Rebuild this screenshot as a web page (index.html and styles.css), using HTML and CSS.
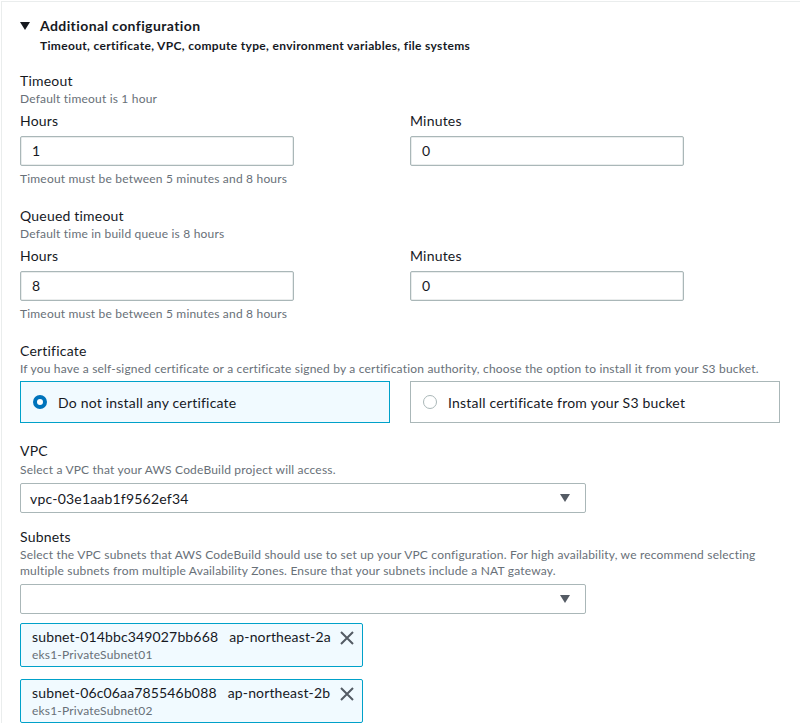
FILE: index.html
```html
<!DOCTYPE html>
<html>
<head>
<meta charset="utf-8">
<link rel="stylesheet" href="styles.css">
</head>
<body>
<div class="panel">
  <div class="header">
    <div class="header-title">
      <svg class="caret" width="10" height="8" viewBox="0 0 10 8"><path d="M0 0 H10 L5 8 Z" fill="#16191f"/></svg>
      <span>Additional configuration</span>
    </div>
    <div class="header-sub">Timeout, certificate, VPC, compute type, environment variables, file systems</div>
  </div>

  <div class="section">
    <div class="label">Timeout</div>
    <div class="desc">Default timeout is 1 hour</div>
    <div class="cols">
      <div class="col">
        <div class="sublabel">Hours</div>
        <div class="input">1</div>
        <div class="hint">Timeout must be between 5 minutes and 8 hours</div>
      </div>
      <div class="col">
        <div class="sublabel">Minutes</div>
        <div class="input">0</div>
      </div>
    </div>
  </div>

  <div class="section">
    <div class="label">Queued timeout</div>
    <div class="desc">Default time in build queue is 8 hours</div>
    <div class="cols">
      <div class="col">
        <div class="sublabel">Hours</div>
        <div class="input">8</div>
        <div class="hint">Timeout must be between 5 minutes and 8 hours</div>
      </div>
      <div class="col">
        <div class="sublabel">Minutes</div>
        <div class="input">0</div>
      </div>
    </div>
  </div>

  <div class="section">
    <div class="label">Certificate</div>
    <div class="desc">If you have a self-signed certificate or a certificate signed by a certification authority, choose the option to install it from your S3 bucket.</div>
    <div class="tiles">
      <div class="tile selected">
        <span class="radio on"></span>
        <span>Do not install any certificate</span>
      </div>
      <div class="tile">
        <span class="radio"></span>
        <span>Install certificate from your S3 bucket</span>
      </div>
    </div>
  </div>

  <div class="section vpc">
    <div class="label">VPC</div>
    <div class="desc">Select a VPC that your AWS CodeBuild project will access.</div>
    <div class="select">
      <span>vpc-03e1aab1f9562ef34</span>
      <svg class="arrow" width="10" height="8" viewBox="0 0 10 8"><path d="M0 0 H10 L5 8 Z" fill="#545b64"/></svg>
    </div>
  </div>

  <div class="section subnets">
    <div class="label">Subnets</div>
    <div class="desc">Select the VPC subnets that AWS CodeBuild should use to set up your VPC configuration. For high availability, we recommend selecting multiple subnets from multiple Availability Zones. Ensure that your subnets include a NAT gateway.</div>
    <div class="select">
      <span></span>
      <svg class="arrow" width="10" height="8" viewBox="0 0 10 8"><path d="M0 0 H10 L5 8 Z" fill="#545b64"/></svg>
    </div>
    <div class="tokens">
      <div class="token">
        <div class="token-text">
          <div class="token-main"><span>subnet-014bbc349027bb668</span><span>ap-northeast-2a</span></div>
          <div class="token-sub">eks1-PrivateSubnet01</div>
        </div>
        <svg class="x" width="14" height="14" viewBox="0 0 14 14"><path d="M1 1 L13 13 M13 1 L1 13" stroke="#545b64" stroke-width="2" fill="none"/></svg>
      </div>
      <div class="token">
        <div class="token-text">
          <div class="token-main"><span>subnet-06c06aa785546b088</span><span>ap-northeast-2b</span></div>
          <div class="token-sub">eks1-PrivateSubnet02</div>
        </div>
        <svg class="x" width="14" height="14" viewBox="0 0 14 14"><path d="M1 1 L13 13 M13 1 L1 13" stroke="#545b64" stroke-width="2" fill="none"/></svg>
      </div>
    </div>
  </div>
</div>
</body>
</html>
```

FILE: styles.css
```css
html, body {
  margin: 0;
  padding: 0;
  background: #ffffff;
}
body {
  font-family: Lato, "Liberation Sans", sans-serif;
  color: #16191f;
  font-size: 14px;
  letter-spacing: 0.2px;
}
.panel {
  margin: 1px 0 0 1px;
  border-top: 1px solid #eaeded;
  border-left: 1px solid #eaeded;
  padding: 13px 20px 0 18px;
}
.header-title {
  display: flex;
  align-items: center;
  gap: 10px;
  font-weight: 700;
  font-size: 14px;
  line-height: 22px;
  color: #16191f;
  letter-spacing: 0.4px;
}
.caret {
  display: block;
}
.header-sub {
  margin-left: 20px;
  font-weight: 700;
  font-size: 12px;
  line-height: 16px;
  margin-top: 1px;
  letter-spacing: 0.33px;
}
.section {
  margin-top: 17px;
}
.section + .section {
  margin-top: 19px;
}
.label {
  font-size: 14px;
  line-height: 20px;
}
.desc {
  font-size: 12px;
  line-height: 16px;
  color: #687078;
  letter-spacing: 0.19px;
}
.cols {
  display: grid;
  grid-template-columns: 370px 370px;
  column-gap: 20px;
  margin-top: 4px;
}
.sublabel {
  font-size: 14px;
  line-height: 20px;
}
.input {
  box-sizing: border-box;
  width: 274px;
  height: 30px;
  margin-top: 5px;
  border: 1px solid #aab7b8;
  border-radius: 2px;
  box-shadow: inset 0 0 0 0.5px #d5dbdb;
  padding: 0 11px;
  line-height: 28px;
  font-size: 14px;
}
.hint {
  margin-top: 5px;
  font-size: 12px;
  line-height: 16px;
  color: #687078;
  letter-spacing: 0.19px;
}
.tiles {
  display: grid;
  grid-template-columns: 370px 370px;
  column-gap: 20px;
  margin-top: 4px;
}
.tile {
  box-sizing: border-box;
  height: 42px;
  border: 1px solid #aab7b8;
  display: flex;
  align-items: center;
  gap: 11px;
  padding-left: 12px;
  font-size: 14px;
}
.tile.selected {
  border-color: #00a1c9;
  background: #f1faff;
}
.radio {
  box-sizing: border-box;
  width: 14px;
  height: 14px;
  border-radius: 50%;
  border: 1px solid #aab7b8;
  background: #fff;
}
.radio.on {
  border: 4px solid #0073bb;
}
.section.vpc {
  margin-top: 18px;
}
.section.vpc .desc {
  margin-top: 1px;
}
.select {
  box-sizing: border-box;
  width: 566px;
  height: 30px;
  margin-top: 5px;
  border: 1px solid #aab7b8;
  border-radius: 2px;
  display: flex;
  align-items: center;
  justify-content: space-between;
  padding: 0 15px 0 9px;
  font-size: 14px;
}
.section.subnets {
  margin-top: 14px;
}
.tokens {
  display: flex;
  flex-direction: column;
  gap: 12px;
  margin-top: 9px;
}
.token {
  box-sizing: border-box;
  width: 343px;
  height: 44px;
  border: 1px solid #00a1c9;
  border-radius: 2px;
  background: #f1faff;
  display: flex;
  align-items: center;
  justify-content: space-between;
  padding: 0 8px 0 11px;
}
.token-main {
  display: flex;
  gap: 11px;
  font-size: 14px;
  line-height: 20px;
  letter-spacing: 0.15px;
}
.token-sub {
  font-size: 12px;
  line-height: 16px;
  color: #687078;
  letter-spacing: 0.19px;
}
.x {
  display: block;
  margin-top: -14px;
}
```
